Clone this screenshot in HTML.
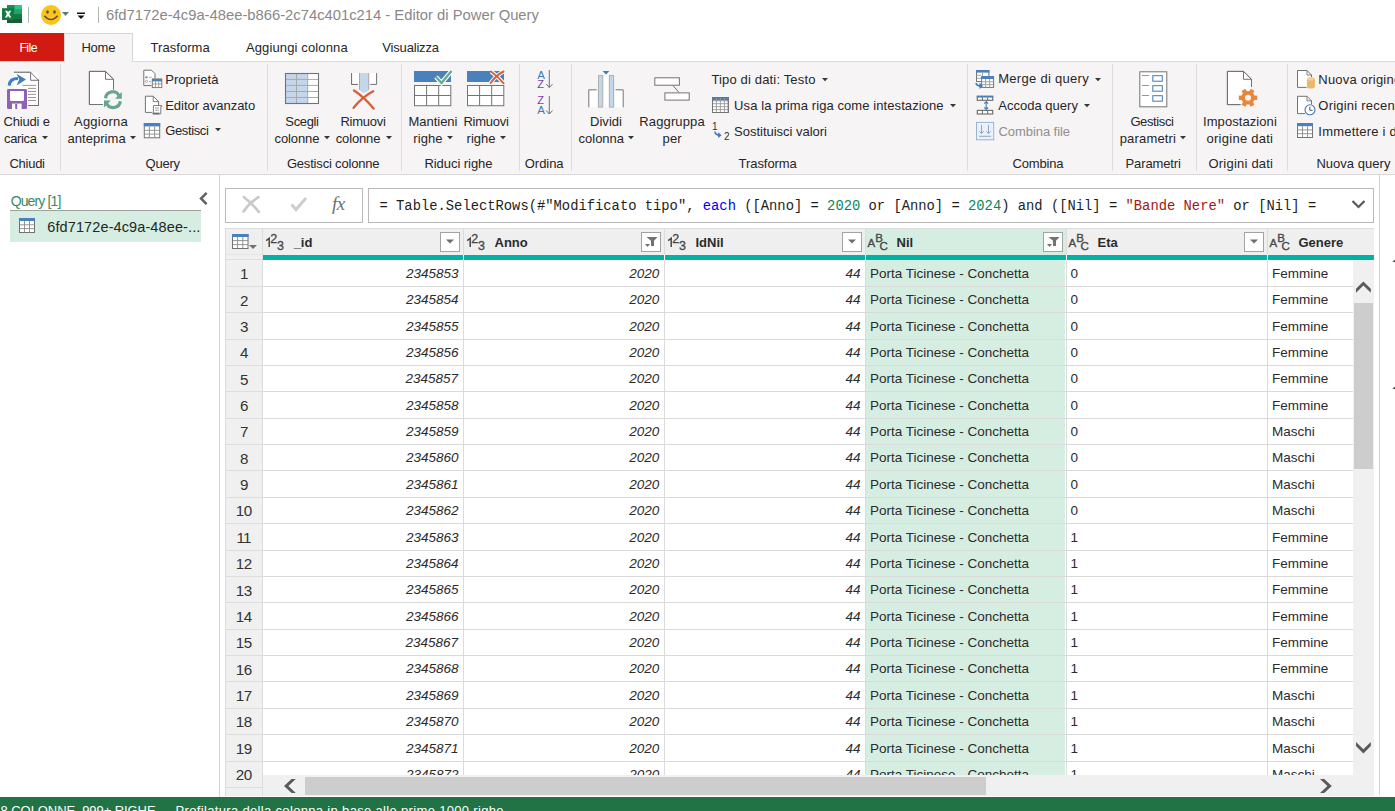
<!DOCTYPE html>
<html><head><meta charset="utf-8"><title>Editor di Power Query</title>
<style>
html,body{margin:0;padding:0;width:1395px;height:811px;overflow:hidden;background:#fff;}
body{position:relative;font-family:"Liberation Sans", sans-serif;}
.t{position:absolute;white-space:nowrap;}
.r{position:absolute;}
.s{position:absolute;overflow:visible;}
</style></head><body>
<div class="r" style="left:0px;top:0px;width:1395px;height:33px;background:#ffffff;"></div>
<svg class="s" style="left:2px;top:5px;" width="21" height="19" viewBox="0 0 21 19">
<rect x="5" y="0" width="15" height="18" fill="#21a366"/>
<rect x="12.5" y="0" width="7.5" height="4.5" fill="#33c481"/>
<rect x="5" y="0" width="7.5" height="4.5" fill="#185c37" opacity="0.35"/>
<rect x="12.5" y="4.5" width="7.5" height="4.5" fill="#21a366"/>
<rect x="5" y="9" width="15" height="4.5" fill="#107c41"/>
<rect x="5" y="13.5" width="15" height="4.5" fill="#185c37"/>
<rect x="0" y="3.2" width="12" height="11.8" fill="#107c41"/>
<path d="M3 5.8 H5.3 L6.1 7.6 L6.9 5.8 H9.2 L7.3 9.1 L9.3 12.4 H7 L6.1 10.6 L5.2 12.4 H2.9 L4.9 9.1 Z" fill="#fff"/>
</svg>
<div class="r" style="left:28px;top:7px;width:1px;height:16px;background:#a9b7ae;"></div>
<svg class="s" style="left:40px;top:4px;" width="22" height="22" viewBox="0 0 22 22">
<circle cx="11" cy="11" r="10" fill="#fcc419"/>
<ellipse cx="7.5" cy="8" rx="1.3" ry="1.8" fill="#505050"/>
<ellipse cx="14.5" cy="8" rx="1.3" ry="1.8" fill="#505050"/>
<path d="M4.3 11.8 Q11 19.5 17.7 11.8" stroke="#505050" stroke-width="1.4" fill="none"/>
</svg>
<svg class="s" style="left:62px;top:12px;" width="8" height="5" viewBox="0 0 8 5"><path d="M0 0 L7 0 L3.5 4 Z" fill="#5e7a6a"/></svg>
<svg class="s" style="left:77px;top:12px;" width="10" height="8" viewBox="0 0 10 8"><rect x="0" y="0.5" width="8" height="1.5" fill="#111"/><path d="M0.5 3.5 L7.5 3.5 L4 7 Z" fill="#111"/></svg>
<div class="r" style="left:98px;top:7px;width:1px;height:16px;background:#a9b7ae;"></div>
<div class="t" style="left:106.00px;top:8.47px;font-size:14.8px;line-height:14.8px;color:#8a8886;font-weight:normal;font-style:normal;font-family:'Liberation Sans', sans-serif;letter-spacing:-0.010px;">6fd7172e-4c9a-48ee-b866-2c74c401c214 - Editor di Power Query</div>
<div class="r" style="left:0px;top:33px;width:1395px;height:28px;background:#ffffff;"></div>
<div class="r" style="left:0px;top:33px;width:64px;height:28px;background:#d11a12;"></div>
<div class="t" style="left:19.40px;top:41.50px;font-size:12.4px;line-height:12.4px;color:#ffffff;font-weight:normal;font-style:normal;font-family:'Liberation Sans', sans-serif;letter-spacing:-0.600px;">File</div>
<div class="r" style="left:64px;top:33px;width:69px;height:29px;background:#f6f4f5;border:1px solid #d6d6d6;border-bottom:none;box-sizing:border-box;"></div>
<div class="t" style="left:81.40px;top:41.00px;font-size:13px;line-height:13px;color:#262626;font-weight:normal;font-style:normal;font-family:'Liberation Sans', sans-serif;letter-spacing:-0.233px;">Home</div>
<div class="t" style="left:150.50px;top:41.00px;font-size:13px;line-height:13px;color:#262626;font-weight:normal;font-style:normal;font-family:'Liberation Sans', sans-serif;letter-spacing:0.056px;">Trasforma</div>
<div class="t" style="left:245.90px;top:41.00px;font-size:13px;line-height:13px;color:#262626;font-weight:normal;font-style:normal;font-family:'Liberation Sans', sans-serif;letter-spacing:0.137px;">Aggiungi colonna</div>
<div class="t" style="left:382.30px;top:41.00px;font-size:13px;line-height:13px;color:#262626;font-weight:normal;font-style:normal;font-family:'Liberation Sans', sans-serif;letter-spacing:-0.178px;">Visualizza</div>
<div class="r" style="left:0px;top:61px;width:1395px;height:1px;background:#dadada;"></div>
<div class="r" style="left:0px;top:62px;width:1395px;height:112px;background:#f6f4f5;"></div>
<div class="r" style="left:0px;top:174px;width:1395px;height:1px;background:#d8d8d8;"></div>
<div class="r" style="left:65px;top:61px;width:67px;height:1px;background:#f6f4f5;"></div>
<div class="r" style="left:60px;top:64px;width:1px;height:107px;background:#dcdcdc;"></div>
<div class="r" style="left:267px;top:64px;width:1px;height:107px;background:#dcdcdc;"></div>
<div class="r" style="left:401px;top:64px;width:1px;height:107px;background:#dcdcdc;"></div>
<div class="r" style="left:519px;top:64px;width:1px;height:107px;background:#dcdcdc;"></div>
<div class="r" style="left:571px;top:64px;width:1px;height:107px;background:#dcdcdc;"></div>
<div class="r" style="left:967px;top:64px;width:1px;height:107px;background:#dcdcdc;"></div>
<div class="r" style="left:1112px;top:64px;width:1px;height:107px;background:#dcdcdc;"></div>
<div class="r" style="left:1196px;top:64px;width:1px;height:107px;background:#dcdcdc;"></div>
<div class="r" style="left:1287px;top:64px;width:1px;height:107px;background:#dcdcdc;"></div>
<div class="t" style="left:9.50px;top:156.80px;font-size:13px;line-height:13px;color:#262626;font-weight:normal;font-style:normal;font-family:'Liberation Sans', sans-serif;letter-spacing:-0.270px;">Chiudi</div>
<div class="t" style="left:145.50px;top:156.80px;font-size:13px;line-height:13px;color:#262626;font-weight:normal;font-style:normal;font-family:'Liberation Sans', sans-serif;letter-spacing:-0.225px;">Query</div>
<div class="t" style="left:286.90px;top:156.80px;font-size:13px;line-height:13px;color:#262626;font-weight:normal;font-style:normal;font-family:'Liberation Sans', sans-serif;letter-spacing:-0.180px;">Gestisci colonne</div>
<div class="t" style="left:424.40px;top:156.80px;font-size:13px;line-height:13px;color:#262626;font-weight:normal;font-style:normal;font-family:'Liberation Sans', sans-serif;letter-spacing:-0.050px;">Riduci righe</div>
<div class="t" style="left:524.80px;top:156.80px;font-size:13px;line-height:13px;color:#262626;font-weight:normal;font-style:normal;font-family:'Liberation Sans', sans-serif;letter-spacing:-0.050px;">Ordina</div>
<div class="t" style="left:738.60px;top:156.80px;font-size:13px;line-height:13px;color:#262626;font-weight:normal;font-style:normal;font-family:'Liberation Sans', sans-serif;letter-spacing:-0.069px;">Trasforma</div>
<div class="t" style="left:1012.50px;top:156.80px;font-size:13px;line-height:13px;color:#262626;font-weight:normal;font-style:normal;font-family:'Liberation Sans', sans-serif;letter-spacing:-0.158px;">Combina</div>
<div class="t" style="left:1125.60px;top:156.80px;font-size:13px;line-height:13px;color:#262626;font-weight:normal;font-style:normal;font-family:'Liberation Sans', sans-serif;letter-spacing:-0.144px;">Parametri</div>
<div class="t" style="left:1208.50px;top:156.80px;font-size:13px;line-height:13px;color:#262626;font-weight:normal;font-style:normal;font-family:'Liberation Sans', sans-serif;letter-spacing:0.214px;">Origini dati</div>
<div class="t" style="left:1316.40px;top:156.80px;font-size:13px;line-height:13px;color:#262626;font-weight:normal;font-style:normal;font-family:'Liberation Sans', sans-serif;letter-spacing:0.030px;">Nuova query</div>
<svg class="s" style="left:4px;top:68px;" width="40" height="44" viewBox="0 0 40 44">
<path d="M10 4.3 H26.6 L34.5 12.3 V37.5 H24" fill="#fff" stroke="#737373" stroke-width="1"/>
<path d="M26.6 4.3 V12.3 H34.5" fill="none" stroke="#737373" stroke-width="1"/>
<rect x="10" y="4.3" width="24" height="33" fill="#fff" />
<path d="M10 4.3 H26.6 L34.5 12.3 V37.5 H24" fill="none" stroke="#737373" stroke-width="1"/>
<path d="M26.6 4.3 V12.3 H34.5" fill="none" stroke="#737373" stroke-width="1"/>
<g stroke="#8c8c8c" stroke-width="0.9">
<path d="M18.5 17.4 H32"/><path d="M24 20.4 H32"/><path d="M24 23.5 H32"/><path d="M24 26.4 H32"/><path d="M24 29.5 H32"/><path d="M24 32.5 H32"/>
</g>
<path d="M5.2 17.6 C5.5 12.5 9 10.6 14 10.6" fill="none" stroke="#3f7fc1" stroke-width="3"/>
<path d="M12.6 5.8 L22 11.6 L12.6 17.4 L15.2 11.6 Z" fill="#3f7fc1"/>
<rect x="3" y="21" width="20" height="20" rx="1.2" fill="#9160b8"/>
<path d="M6 23 H20 V31.8 Q20 33 18.8 33 H7.2 Q6 33 6 31.8 Z" fill="#fff"/>
<rect x="8" y="35.6" width="9.6" height="5.4" fill="#fff"/>
<rect x="11.2" y="36" width="2" height="5" fill="#9160b8"/>
</svg>
<div class="t" style="left:3.50px;top:115.00px;font-size:13px;line-height:13px;color:#262626;font-weight:normal;font-style:normal;font-family:'Liberation Sans', sans-serif;letter-spacing:-0.171px;">Chiudi e</div>
<div class="t" style="left:4.00px;top:131.50px;font-size:13px;line-height:13px;color:#262626;font-weight:normal;font-style:normal;font-family:'Liberation Sans', sans-serif;letter-spacing:-0.340px;">carica</div>
<svg class="s" style="left:42px;top:135.5px;" width="7" height="4" viewBox="0 0 7 4"><path d="M0 0 L6 0 L3 3.2 Z" fill="#2f3a33"/></svg>
<svg class="s" style="left:84px;top:66px;" width="44" height="46" viewBox="0 0 44 46">
<path d="M18.7 38.5 H5.4 V5.4 H21.5 L29.5 13.3 V23.5" fill="#fff" stroke="#737373" stroke-width="1"/>
<path d="M21.5 5.4 V13.3 H29.5" fill="none" stroke="#737373" stroke-width="1"/>
<rect x="6" y="14" width="23" height="24" fill="#fff"/>
<path d="M18.7 38.5 H5.4 V5.4 H21.5 L29.5 13.3 V23.5" fill="none" stroke="#737373" stroke-width="1"/>
<circle cx="28.9" cy="33.7" r="9.4" fill="#f6f4f5"/>
<g fill="none" stroke="#67a58e" stroke-width="3.2">
<path d="M21.5 32.2 A7.2 7.2 0 0 1 35.2 30"/>
<path d="M36.3 35.2 A7.2 7.2 0 0 1 22.6 37.4"/>
</g>
<path d="M37.8 26 V32.8 H31 Z" fill="#67a58e"/>
<path d="M20 41.4 V34.6 H26.8 Z" fill="#67a58e"/>
</svg>
<div class="t" style="left:74.00px;top:115.00px;font-size:13px;line-height:13px;color:#262626;font-weight:normal;font-style:normal;font-family:'Liberation Sans', sans-serif;letter-spacing:0.236px;">Aggiorna</div>
<div class="t" style="left:67.40px;top:131.50px;font-size:13px;line-height:13px;color:#262626;font-weight:normal;font-style:normal;font-family:'Liberation Sans', sans-serif;letter-spacing:0.056px;">anteprima</div>
<svg class="s" style="left:130px;top:135.5px;" width="7" height="4" viewBox="0 0 7 4"><path d="M0 0 L6 0 L3 3.2 Z" fill="#2f3a33"/></svg>
<svg class="s" style="left:140px;top:66px;" width="26" height="78" viewBox="0 0 26 78">
<path d="M3.8 19.5 V4.2 H11.5 L15 7.7 V12.5" fill="#fff" stroke="#737373" stroke-width="1"/>
<circle cx="6.5" cy="11.3" r="1.2" fill="#9a9a9a"/><path d="M9 11.3 H11.5" stroke="#9a9a9a" stroke-width="0.9"/>
<circle cx="6.5" cy="15.4" r="1.1" fill="none" stroke="#9a9a9a" stroke-width="0.8"/><path d="M9 15.4 H11" stroke="#9a9a9a" stroke-width="0.9"/>
<path d="M3.8 19.6 H11.6" stroke="#737373" stroke-width="1"/>
<rect x="12.3" y="13" width="9.5" height="8.6" fill="#fff" stroke="#737373" stroke-width="0.9"/>
<rect x="12" y="12.8" width="10" height="2.6" fill="#4a80bb"/>
<path d="M12.3 18 H21.8 M15.5 15.4 V21.6 M18.7 15.4 V21.6" stroke="#8a8a8a" stroke-width="0.8"/>
<path d="M12 46.4 H5.4 V30.2 H13.2 L18.6 35.6 V40" fill="#fff" stroke="#737373" stroke-width="1"/>
<path d="M13.2 30.2 V35.6 H18.6" fill="none" stroke="#737373" stroke-width="0.9"/>
<path d="M13.5 39.5 H21.8 V40.6 H20.8 V47.8 H13.3 Z" fill="#fff" stroke="#737373" stroke-width="0.9"/>
<path d="M15 42 H19 M15 44.2 H19" stroke="#8a8a8a" stroke-width="0.8"/>
<rect x="12.6" y="46.6" width="6.8" height="1.8" fill="#707070"/>
<rect x="4.3" y="57.5" width="15.4" height="14.3" fill="#fff" stroke="#737373" stroke-width="1"/>
<rect x="3.8" y="57" width="16.4" height="3.4" fill="#4a80bb"/>
<path d="M4.3 64.3 H19.7 M4.3 68.1 H19.7 M9.4 60.4 V71.8 M14.6 60.4 V71.8" stroke="#8a8a8a" stroke-width="0.9"/>
</svg>
<div class="t" style="left:165.20px;top:72.70px;font-size:13px;line-height:13px;color:#262626;font-weight:normal;font-style:normal;font-family:'Liberation Sans', sans-serif;letter-spacing:0.069px;">Proprietà</div>
<div class="t" style="left:165.20px;top:98.50px;font-size:13px;line-height:13px;color:#262626;font-weight:normal;font-style:normal;font-family:'Liberation Sans', sans-serif;letter-spacing:-0.025px;">Editor avanzato</div>
<div class="t" style="left:165.20px;top:124.40px;font-size:13px;line-height:13px;color:#262626;font-weight:normal;font-style:normal;font-family:'Liberation Sans', sans-serif;letter-spacing:-0.379px;">Gestisci</div>
<svg class="s" style="left:214.5px;top:128.3px;" width="7" height="4" viewBox="0 0 7 4"><path d="M0 0 L6 0 L3 3.2 Z" fill="#2f3a33"/></svg>
<svg class="s" style="left:280px;top:68px;" width="104" height="44" viewBox="0 0 104 44">
<rect x="5.5" y="5.5" width="33" height="30" fill="#fff"/>
<rect x="5.5" y="5.5" width="22" height="30" fill="#c4d6ea"/>
<g stroke="#a9a9a9" stroke-width="1">
<path d="M16.5 5.5 V35.5 M27.7 5.5 V35.5 M5.5 11.4 H38.5 M5.5 17.4 H38.5 M5.5 23.5 H38.5 M5.5 29.5 H38.5"/>
</g>
<rect x="5.5" y="5.5" width="33" height="30" fill="none" stroke="#737373" stroke-width="1.1"/>
<path d="M71.6 5 V16.4 H77.8" fill="#fff" stroke="#737373" stroke-width="1"/>
<rect x="72.1" y="5" width="7" height="11" fill="#fff"/>
<rect x="89.5" y="5" width="7" height="11" fill="#fff"/>
<path d="M71.6 5 V16.4 H77.8 M96.6 5 V16.4 H90.2" fill="none" stroke="#737373" stroke-width="1"/>
<path d="M79.5 5 V22.5 L84.1 25 L88.7 22.5 V5 Z" fill="#c4d6ea"/>
<path d="M79.5 5 V21.5 M88.7 5 V21.5" stroke="#a9a9a9" stroke-width="1"/>
<path d="M74 22.6 Q84 29 93.5 40.5" fill="none" stroke="#d9603b" stroke-width="2.4" stroke-linecap="round"/>
<path d="M93.2 23.3 Q82 29 73.6 39.8" fill="none" stroke="#d9603b" stroke-width="2.4" stroke-linecap="round"/>
</svg>
<div class="t" style="left:285.30px;top:115.00px;font-size:13px;line-height:13px;color:#262626;font-weight:normal;font-style:normal;font-family:'Liberation Sans', sans-serif;letter-spacing:-0.340px;">Scegli</div>
<div class="t" style="left:274.60px;top:131.50px;font-size:13px;line-height:13px;color:#262626;font-weight:normal;font-style:normal;font-family:'Liberation Sans', sans-serif;letter-spacing:-0.125px;">colonne</div>
<svg class="s" style="left:324px;top:135.5px;" width="7" height="4" viewBox="0 0 7 4"><path d="M0 0 L6 0 L3 3.2 Z" fill="#2f3a33"/></svg>
<div class="t" style="left:340.40px;top:115.00px;font-size:13px;line-height:13px;color:#262626;font-weight:normal;font-style:normal;font-family:'Liberation Sans', sans-serif;letter-spacing:-0.225px;">Rimuovi</div>
<div class="t" style="left:335.70px;top:131.50px;font-size:13px;line-height:13px;color:#262626;font-weight:normal;font-style:normal;font-family:'Liberation Sans', sans-serif;letter-spacing:-0.142px;">colonne</div>
<svg class="s" style="left:386px;top:135.5px;" width="7" height="4" viewBox="0 0 7 4"><path d="M0 0 L6 0 L3 3.2 Z" fill="#2f3a33"/></svg>
<svg class="s" style="left:410px;top:66px;" width="98" height="44" viewBox="0 0 98 44">
<rect x="4" y="5" width="37" height="11" fill="#4a80bb"/>
<rect x="4.5" y="19.5" width="36.3" height="20.2" fill="#fff" stroke="#737373" stroke-width="1"/>
<path d="M16.6 19.5 V39.7 M28.7 19.5 V39.7 M4.5 29.5 H40.8" stroke="#737373" stroke-width="1"/>
<path d="M26 11 L31.5 17 L41.5 5" fill="none" stroke="#fff" stroke-width="4.5"/>
<path d="M26 11 L31.5 17 L41.5 5" fill="none" stroke="#68a88f" stroke-width="2.4"/>
<rect x="57" y="5" width="37" height="11" fill="#4a80bb"/>
<rect x="57.5" y="19.5" width="36.3" height="20.2" fill="#fff" stroke="#737373" stroke-width="1"/>
<path d="M69.6 19.5 V39.7 M81.7 19.5 V39.7 M57.5 29.5 H93.8" stroke="#737373" stroke-width="1"/>
<path d="M81 5.5 Q88 10.5 93.6 17.3 M93.5 5.5 Q86 9.5 80.6 17" fill="none" stroke="#fff" stroke-width="4"/>
<path d="M81 5.5 Q88 10.5 93.6 17.3 M93.5 5.5 Q86 9.5 80.6 17" fill="none" stroke="#d9603b" stroke-width="2" stroke-linecap="round"/>
</svg>
<div class="t" style="left:408.60px;top:115.00px;font-size:13px;line-height:13px;color:#262626;font-weight:normal;font-style:normal;font-family:'Liberation Sans', sans-serif;letter-spacing:-0.050px;">Mantieni</div>
<div class="t" style="left:413.30px;top:131.50px;font-size:13px;line-height:13px;color:#262626;font-weight:normal;font-style:normal;font-family:'Liberation Sans', sans-serif;letter-spacing:0.075px;">righe</div>
<svg class="s" style="left:447px;top:135.5px;" width="7" height="4" viewBox="0 0 7 4"><path d="M0 0 L6 0 L3 3.2 Z" fill="#2f3a33"/></svg>
<div class="t" style="left:463.40px;top:115.00px;font-size:13px;line-height:13px;color:#262626;font-weight:normal;font-style:normal;font-family:'Liberation Sans', sans-serif;letter-spacing:-0.258px;">Rimuovi</div>
<div class="t" style="left:466.60px;top:131.50px;font-size:13px;line-height:13px;color:#262626;font-weight:normal;font-style:normal;font-family:'Liberation Sans', sans-serif;">righe</div>
<svg class="s" style="left:500px;top:135.5px;" width="7" height="4" viewBox="0 0 7 4"><path d="M0 0 L6 0 L3 3.2 Z" fill="#2f3a33"/></svg>
<svg class="s" style="left:530px;top:66px;" width="30" height="52" viewBox="0 0 30 52">
<text x="11" y="12.7" font-family="Liberation Sans" font-size="11.5" fill="#3d7ab8" text-anchor="middle">A</text>
<text x="10.5" y="21.8" font-family="Liberation Sans" font-size="11" fill="#7b3fa8" text-anchor="middle">Z</text>
<text x="10.5" y="37.8" font-family="Liberation Sans" font-size="11" fill="#7b3fa8" text-anchor="middle">Z</text>
<text x="11" y="47.8" font-family="Liberation Sans" font-size="11.5" fill="#3d7ab8" text-anchor="middle">A</text>
<g fill="none" stroke="#707070" stroke-width="1">
<path d="M19.3 4 V21.5 M16.2 18 L19.3 21.5 L22.6 18"/>
<path d="M19.3 30 V48 M16.2 44.5 L19.3 48 L22.6 44.5"/>
</g>
</svg>
<svg class="s" style="left:584px;top:68px;" width="110" height="42" viewBox="0 0 110 42">
<rect x="4.3" y="21.3" width="8.5" height="18" fill="#fff"/>
<rect x="31.2" y="21.3" width="8.5" height="18" fill="#fff"/>
<rect x="18.8" y="7.3" width="6.4" height="32" fill="#fff"/>
<path d="M4.8 39.3 V21.8 H12.8 M31.5 21.8 H39.2 V39.3" fill="none" stroke="#737373" stroke-width="1"/>
<rect x="14.5" y="7.6" width="4.3" height="31.5" fill="#c4d6ea" stroke="#a9a9a9" stroke-width="0.9"/>
<rect x="25.3" y="7.6" width="4.3" height="31.5" fill="#c4d6ea" stroke="#a9a9a9" stroke-width="0.9"/>
<path d="M18.6 3 H25.4 L22 6.6 Z" fill="#3d7ab8"/>
<rect x="70.8" y="9.8" width="24.6" height="7.4" fill="#fff" stroke="#737373" stroke-width="1"/>
<rect x="80.9" y="24.9" width="24.3" height="7.2" fill="#fff" stroke="#737373" stroke-width="1"/>
<path d="M89 17.6 L95 24.5" stroke="#737373" stroke-width="1"/>
</svg>
<div class="t" style="left:590.00px;top:115.00px;font-size:13px;line-height:13px;color:#262626;font-weight:normal;font-style:normal;font-family:'Liberation Sans', sans-serif;letter-spacing:0.040px;">Dividi</div>
<div class="t" style="left:578.60px;top:131.50px;font-size:13px;line-height:13px;color:#262626;font-weight:normal;font-style:normal;font-family:'Liberation Sans', sans-serif;letter-spacing:-0.025px;">colonna</div>
<svg class="s" style="left:627.7px;top:135.5px;" width="7" height="4" viewBox="0 0 7 4"><path d="M0 0 L6 0 L3 3.2 Z" fill="#2f3a33"/></svg>
<div class="t" style="left:639.30px;top:115.00px;font-size:13px;line-height:13px;color:#262626;font-weight:normal;font-style:normal;font-family:'Liberation Sans', sans-serif;letter-spacing:0.131px;">Raggruppa</div>
<div class="t" style="left:662.50px;top:131.50px;font-size:13px;line-height:13px;color:#262626;font-weight:normal;font-style:normal;font-family:'Liberation Sans', sans-serif;letter-spacing:0.200px;">per</div>
<svg class="s" style="left:706px;top:92px;" width="30" height="52" viewBox="0 0 30 52">
<rect x="6.5" y="5.5" width="15.8" height="15" fill="#fff" stroke="#737373" stroke-width="1"/>
<rect x="6.5" y="5.5" width="15.8" height="3" fill="#4a80bb"/>
<path d="M6.5 8.8 H22.3 M6.5 11.7 H22.3 M6.5 14.7 H22.3 M6.5 17.6 H22.3 M10.4 5.5 V20.5 M14.4 5.5 V20.5 M18.4 5.5 V20.5" stroke="#999" stroke-width="0.9"/>
<rect x="6.5" y="5.5" width="15.8" height="15" fill="none" stroke="#737373" stroke-width="1"/>
<text x="6" y="37.8" font-family="Liberation Sans" font-size="10" fill="#333">1</text>
<text x="18" y="47.5" font-family="Liberation Sans" font-size="10" fill="#333">2</text>
<path d="M8.8 39.6 Q9.5 43.2 14 43.2" fill="none" stroke="#3d7ab8" stroke-width="1.6"/>
<path d="M12.2 40.3 L15.6 43.2 L12.2 46 Z" fill="#3d7ab8"/>
</svg>
<div class="t" style="left:711.40px;top:73.00px;font-size:13px;line-height:13px;color:#262626;font-weight:normal;font-style:normal;font-family:'Liberation Sans', sans-serif;letter-spacing:0.158px;">Tipo di dati: Testo</div>
<svg class="s" style="left:821.5px;top:78px;" width="7" height="4" viewBox="0 0 7 4"><path d="M0 0 L6 0 L3 3.2 Z" fill="#2f3a33"/></svg>
<div class="t" style="left:734.10px;top:98.80px;font-size:13px;line-height:13px;color:#262626;font-weight:normal;font-style:normal;font-family:'Liberation Sans', sans-serif;letter-spacing:0.084px;">Usa la prima riga come intestazione</div>
<svg class="s" style="left:950px;top:104px;" width="7" height="4" viewBox="0 0 7 4"><path d="M0 0 L6 0 L3 3.2 Z" fill="#2f3a33"/></svg>
<div class="t" style="left:734.10px;top:124.90px;font-size:13px;line-height:13px;color:#262626;font-weight:normal;font-style:normal;font-family:'Liberation Sans', sans-serif;letter-spacing:-0.018px;">Sostituisci valori</div>
<svg class="s" style="left:972px;top:66px;" width="26" height="78" viewBox="0 0 26 78">
<rect x="4.5" y="4.5" width="12.4" height="11" fill="#fff" stroke="#737373" stroke-width="1"/>
<rect x="4" y="4" width="13.4" height="2.6" fill="#4a80bb"/>
<path d="M4.5 9.3 H9 M4.5 12.3 H9 M10.5 6.6 V10" stroke="#999" stroke-width="0.9"/>
<rect x="9.6" y="10.6" width="12" height="10.8" fill="#fff" stroke="#737373" stroke-width="1"/>
<rect x="9.2" y="10.1" width="12.8" height="2.9" fill="#4a80bb"/>
<path d="M9.6 15.8 H21.6 M9.6 18.6 H21.6 M13.6 13 V21.4 M17.6 13 V21.4" stroke="#999" stroke-width="0.9"/>
<path d="M4.2 17 Q4.5 20 8.5 20" fill="none" stroke="#3d7ab8" stroke-width="1.8"/>
<path d="M7.5 16.8 L11 20 L7.5 23 Z" fill="#3d7ab8"/>
<rect x="5.3" y="30.3" width="15.4" height="4" fill="#fff" stroke="#737373" stroke-width="1.2"/>
<rect x="4.8" y="29.8" width="16.4" height="1.8" fill="#4a80bb"/>
<path d="M10.4 31.5 V34.3 M15.6 31.5 V34.3" stroke="#737373" stroke-width="1.1"/>
<rect x="5.3" y="44.4" width="15.4" height="3.6" fill="#fff" stroke="#737373" stroke-width="1.2"/>
<path d="M10.4 44.4 V48 M15.6 44.4 V48" stroke="#737373" stroke-width="1.1"/>
<path d="M14.2 35.5 V43.5 M12.3 37.6 L14.2 35.5 L16.1 37.6 M12.3 41.4 L14.2 43.5 L16.1 41.4" fill="none" stroke="#3d7ab8" stroke-width="1.1"/>
<rect x="4.5" y="56.4" width="17.2" height="17.4" fill="#eaf1fa" stroke="#9ab4d6" stroke-width="1"/>
<g fill="none" stroke="#8ea7c6" stroke-width="1">
<path d="M9.5 59 V67.5 M7.3 65.2 L9.5 67.5 L11.7 65.2"/>
<path d="M16.5 59 V67.5 M14.3 65.2 L16.5 67.5 L18.7 65.2"/>
<path d="M7 70.3 H19"/>
</g>
</svg>
<div class="t" style="left:998.20px;top:72.20px;font-size:13px;line-height:13px;color:#262626;font-weight:normal;font-style:normal;font-family:'Liberation Sans', sans-serif;letter-spacing:0.292px;">Merge di query</div>
<svg class="s" style="left:1095px;top:77.5px;" width="7" height="4" viewBox="0 0 7 4"><path d="M0 0 L6 0 L3 3.2 Z" fill="#2f3a33"/></svg>
<div class="t" style="left:998.20px;top:98.90px;font-size:13px;line-height:13px;color:#262626;font-weight:normal;font-style:normal;font-family:'Liberation Sans', sans-serif;letter-spacing:0.018px;">Accoda query</div>
<svg class="s" style="left:1084px;top:104px;" width="7" height="4" viewBox="0 0 7 4"><path d="M0 0 L6 0 L3 3.2 Z" fill="#2f3a33"/></svg>
<div class="t" style="left:998.50px;top:124.70px;font-size:13px;line-height:13px;color:#8f8f8f;font-weight:normal;font-style:normal;font-family:'Liberation Sans', sans-serif;letter-spacing:-0.068px;">Combina file</div>
<svg class="s" style="left:1134px;top:66px;" width="40" height="46" viewBox="0 0 40 46">
<rect x="5.8" y="5.8" width="27" height="35" fill="#fff" stroke="#737373" stroke-width="1"/>
<path d="M8 9.5 H15 M8 19.5 H15 M8 29.5 H15" stroke="#8a8a8a" stroke-width="0.9"/>
<g fill="none" stroke="#3d7ab8" stroke-width="1">
<rect x="18.8" y="9.7" width="9.5" height="5.5"/>
<rect x="18.8" y="19.7" width="9.5" height="5.5"/>
<rect x="18.8" y="29.7" width="9.5" height="5.5"/>
</g>
</svg>
<div class="t" style="left:1130.40px;top:115.00px;font-size:13px;line-height:13px;color:#262626;font-weight:normal;font-style:normal;font-family:'Liberation Sans', sans-serif;letter-spacing:-0.379px;">Gestisci</div>
<div class="t" style="left:1119.70px;top:131.50px;font-size:13px;line-height:13px;color:#262626;font-weight:normal;font-style:normal;font-family:'Liberation Sans', sans-serif;letter-spacing:0.175px;">parametri</div>
<svg class="s" style="left:1180px;top:135.5px;" width="7" height="4" viewBox="0 0 7 4"><path d="M0 0 L6 0 L3 3.2 Z" fill="#2f3a33"/></svg>
<svg class="s" style="left:1222px;top:66px;" width="40" height="46" viewBox="0 0 40 46">
<path d="M18.5 38.6 H5.4 V5.4 H21.5 L29.5 13.3 V21" fill="#fff" stroke="#737373" stroke-width="1"/>
<rect x="6" y="14" width="23" height="24" fill="#fff"/>
<path d="M18.5 38.6 H5.4 V5.4 H21.5 L29.5 13.3 V21" fill="none" stroke="#737373" stroke-width="1"/>
<path d="M21.5 5.4 V13.3 H29.5" fill="none" stroke="#737373" stroke-width="1"/>
<g transform="translate(26 31.8)">
<circle r="6.8" fill="#e8873a"/>
<g fill="#e8873a">
<rect x="-2.2" y="-9.2" width="4.4" height="18.4" transform="rotate(30)"/>
<rect x="-2.2" y="-9.2" width="4.4" height="18.4" transform="rotate(90)"/>
<rect x="-2.2" y="-9.2" width="4.4" height="18.4" transform="rotate(150)"/>
</g>
<circle r="3" fill="#f6f4f5"/>
</g>
</svg>
<div class="t" style="left:1203.00px;top:115.00px;font-size:13px;line-height:13px;color:#262626;font-weight:normal;font-style:normal;font-family:'Liberation Sans', sans-serif;letter-spacing:0.073px;">Impostazioni</div>
<div class="t" style="left:1206.50px;top:131.50px;font-size:13px;line-height:13px;color:#262626;font-weight:normal;font-style:normal;font-family:'Liberation Sans', sans-serif;letter-spacing:0.264px;">origine dati</div>
<svg class="s" style="left:1292px;top:66px;" width="28" height="78" viewBox="0 0 28 78">
<path d="M5.5 21.4 V4.5 H15 L19.5 9 V11" fill="#fff" stroke="#737373" stroke-width="1"/>
<rect x="6" y="9" width="13" height="12" fill="#fff"/>
<path d="M5.5 21.4 H14.5" stroke="#737373" stroke-width="1"/>
<path d="M15 4.5 V9 H19.5" fill="none" stroke="#737373" stroke-width="0.9"/>
<path d="M14.9 12.8 V20.8 A4 1.8 0 0 0 22.9 20.8 V12.8 Z" fill="#e9b86b"/>
<ellipse cx="18.9" cy="12.8" rx="4" ry="1.8" fill="#f2cf8e"/>
<path d="M5.5 47.6 V30.3 H15 L19.5 34.8 V38.5" fill="#fff" stroke="#737373" stroke-width="1"/>
<rect x="6" y="35" width="13" height="12" fill="#fff"/>
<path d="M5.5 47.6 H13" stroke="#737373" stroke-width="1"/>
<path d="M15 30.3 V34.8 H19.5" fill="none" stroke="#737373" stroke-width="0.9"/>
<circle cx="18" cy="43.8" r="5" fill="#fff" stroke="#3d7ab8" stroke-width="1.1"/>
<path d="M17.8 40.8 V44.3 H20.5" fill="none" stroke="#444" stroke-width="0.9"/>
<rect x="5.5" y="57.5" width="15" height="14" fill="#fff" stroke="#737373" stroke-width="1"/>
<rect x="5" y="57" width="16" height="3.2" fill="#4a80bb"/>
<path d="M5.5 63.9 H20.5 M5.5 67.7 H20.5 M10.5 60.2 V71.5 M15.5 60.2 V71.5" stroke="#8a8a8a" stroke-width="0.9"/>
</svg>
<div class="t" style="left:1318.30px;top:73.00px;font-size:13px;line-height:13px;color:#262626;font-weight:normal;font-style:normal;font-family:'Liberation Sans', sans-serif;letter-spacing:0.22px;">Nuova origine</div>
<div class="t" style="left:1318.30px;top:98.60px;font-size:13px;line-height:13px;color:#262626;font-weight:normal;font-style:normal;font-family:'Liberation Sans', sans-serif;letter-spacing:0.22px;">Origini recenti</div>
<div class="t" style="left:1318.30px;top:124.50px;font-size:13px;line-height:13px;color:#262626;font-weight:normal;font-style:normal;font-family:'Liberation Sans', sans-serif;letter-spacing:0.22px;">Immettere i dati</div>
<div class="r" style="left:0px;top:175px;width:219px;height:622px;background:#ffffff;"></div>
<div class="r" style="left:219px;top:175px;width:1px;height:622px;background:#d6d6d6;"></div>
<div class="t" style="left:10.70px;top:193.75px;font-size:14px;line-height:14px;color:#3a8a62;font-weight:normal;font-style:normal;font-family:'Liberation Sans', sans-serif;letter-spacing:-0.875px;">Query [1]</div>
<div class="r" style="left:10px;top:210px;width:191px;height:1px;background:#a0a0a0;"></div>
<div class="r" style="left:10px;top:211px;width:191px;height:31px;background:#d5eee1;"></div>
<svg class="s" style="left:18px;top:217px;" width="20" height="18" viewBox="0 0 20 18">
<rect x="1.5" y="1.5" width="15" height="14" fill="#fff" stroke="#707070" stroke-width="1"/>
<rect x="1" y="1" width="16" height="3" fill="#4a80bb"/>
<path d="M1.5 7.8 H16.5 M1.5 11.6 H16.5 M6.5 4 V15.5 M11.5 4 V15.5" stroke="#8a8a8a" stroke-width="0.9"/>
</svg>
<div class="t" style="left:47.30px;top:220.03px;font-size:14.5px;line-height:14.5px;color:#262626;font-weight:normal;font-style:normal;font-family:'Liberation Sans', sans-serif;letter-spacing:0.107px;">6fd7172e-4c9a-48ee-...</div>
<svg class="s" style="left:198px;top:191px;" width="12" height="16" viewBox="0 0 12 16"><path d="M8.6 1.8 L3 7.5 L8.6 13.2" fill="none" stroke="#636363" stroke-width="2.5"/></svg>
<div class="r" style="left:220px;top:175px;width:1175px;height:622px;background:#ffffff;"></div>
<div class="r" style="left:1379px;top:175px;width:1px;height:620px;background:#d3d3d3;"></div>
<div class="r" style="left:225px;top:188px;width:138px;height:35px;background:#fff;border:1px solid #b9b9b9;box-sizing:border-box;"></div>
<svg class="s" style="left:240px;top:192px;" width="100" height="28" viewBox="0 0 100 28">
<path d="M3.8 5 Q11 10.5 18.8 19.8" fill="none" stroke="#c9c9c9" stroke-width="2.6" stroke-linecap="round"/>
<path d="M18.5 5.2 Q9 11 3.5 19.5" fill="none" stroke="#c9c9c9" stroke-width="2.6" stroke-linecap="round"/>
<path d="M51.6 12.6 L56 17.6 L66 6" fill="none" stroke="#cdcdcd" stroke-width="3"/>
</svg>
<div class="t" style="left:332px;top:193.5px;font-size:19px;line-height:19px;color:#707070;font-style:italic;font-family:'Liberation Serif', serif;letter-spacing:-0.5px;">fx</div>
<div class="r" style="left:368px;top:188px;width:1006px;height:35px;background:#fff;border:1px solid #b9b9b9;box-sizing:border-box;"></div>
<svg class="s" style="left:1350px;top:197px;" width="18" height="14" viewBox="0 0 18 14"><path d="M2.5 4 L8.5 10 L14.5 4" fill="none" stroke="#595959" stroke-width="2.2"/></svg>
<div class="t" style="left:379.5px;top:199.91px;font-size:13.82px;line-height:13.82px;font-family:'Liberation Mono', monospace;"><span style="color:#1e1e1e">= Table.SelectRows(#"Modificato tipo", </span><span style="color:#0000ff">each</span><span style="color:#1e1e1e"> ([Anno] = </span><span style="color:#098658">2020</span><span style="color:#1e1e1e"> or [Anno] = </span><span style="color:#098658">2024</span><span style="color:#1e1e1e">) and ([Nil] = </span><span style="color:#a31515">"Bande Nere"</span><span style="color:#1e1e1e"> or [Nil] =</span></div>
<div class="r" style="left:225px;top:228px;width:1149px;height:1px;background:#dedede;"></div>
<div class="r" style="left:225px;top:229px;width:1149px;height:26px;background:#efefef;"></div>
<div class="r" style="left:866px;top:229px;width:200px;height:26px;background:#d5eee1;"></div>
<div class="r" style="left:225px;top:255px;width:37px;height:542px;background:#f0f0f0;"></div>
<div class="r" style="left:225px;top:254px;width:37px;height:1px;background:#e4e4e4;"></div>
<div class="r" style="left:225px;top:259px;width:37px;height:1px;background:#e0e0e0;"></div>
<div class="r" style="left:262px;top:229px;width:1px;height:568px;background:#dcdcdc;"></div>
<div class="r" style="left:225px;top:228px;width:1px;height:569px;background:#dcdcdc;"></div>
<svg class="s" style="left:231px;top:233px;" width="28" height="18" viewBox="0 0 28 18">
<rect x="1.5" y="1.5" width="15.5" height="14" fill="#fff" stroke="#707070" stroke-width="1"/>
<rect x="1" y="1" width="16.5" height="3" fill="#4a80bb"/>
<path d="M1.5 7.6 H17 M1.5 11.6 H17 M6.6 4 V15.5 M11.8 4 V15.5" stroke="#8a8a8a" stroke-width="0.9"/>
<path d="M18 12 H26 L22 16 Z" fill="#707070"/>
</svg>
<svg class="s" style="left:265px;top:231px;" width="24" height="22" viewBox="0 0 24 22">
<path d="M1.2 9.6 L4.2 7.2 V16" fill="none" stroke="#484848" stroke-width="1.5"/>
<text x="5.2" y="12" font-family="Liberation Sans" font-size="12.5" fill="#484848" stroke="#484848" stroke-width="0.3">2</text>
<text x="12" y="19.4" font-family="Liberation Sans" font-size="12.5" fill="#484848" stroke="#484848" stroke-width="0.3">3</text>
</svg>
<div class="t" style="left:293.65px;top:235.80px;font-size:13px;line-height:13px;color:#2b2b2b;font-weight:bold;font-style:normal;font-family:'Liberation Sans', sans-serif;">_id</div>
<div class="r" style="left:440px;top:232px;width:20px;height:20px;background:#fff;border:1px solid #a3a3a3;box-sizing:border-box;"></div>
<svg class="s" style="left:446px;top:239px;" width="8" height="5" viewBox="0 0 8 5"><path d="M0 0.5 H8 L4 4.5 Z" fill="#6e6e6e"/></svg>
<div class="r" style="left:463px;top:229px;width:1px;height:26px;background:#dcdcdc;"></div>
<svg class="s" style="left:466px;top:231px;" width="24" height="22" viewBox="0 0 24 22">
<path d="M1.2 9.6 L4.2 7.2 V16" fill="none" stroke="#484848" stroke-width="1.5"/>
<text x="5.2" y="12" font-family="Liberation Sans" font-size="12.5" fill="#484848" stroke="#484848" stroke-width="0.3">2</text>
<text x="12" y="19.4" font-family="Liberation Sans" font-size="12.5" fill="#484848" stroke="#484848" stroke-width="0.3">3</text>
</svg>
<div class="t" style="left:494.50px;top:235.80px;font-size:13px;line-height:13px;color:#2b2b2b;font-weight:bold;font-style:normal;font-family:'Liberation Sans', sans-serif;">Anno</div>
<div class="r" style="left:641px;top:232px;width:20px;height:20px;background:#fff;border:1px solid #a3a3a3;box-sizing:border-box;"></div>
<svg class="s" style="left:644px;top:236px;" width="15" height="12" viewBox="0 0 15 12"><path d="M2.5 1 H13.5 L10 4.8 V10 H7 V4.8 Z" fill="#727272"/><path d="M1 8 H6 L3.5 11 Z" fill="#727272"/></svg>
<div class="r" style="left:664px;top:229px;width:1px;height:26px;background:#dcdcdc;"></div>
<svg class="s" style="left:667px;top:231px;" width="24" height="22" viewBox="0 0 24 22">
<path d="M1.2 9.6 L4.2 7.2 V16" fill="none" stroke="#484848" stroke-width="1.5"/>
<text x="5.2" y="12" font-family="Liberation Sans" font-size="12.5" fill="#484848" stroke="#484848" stroke-width="0.3">2</text>
<text x="12" y="19.4" font-family="Liberation Sans" font-size="12.5" fill="#484848" stroke="#484848" stroke-width="0.3">3</text>
</svg>
<div class="t" style="left:695.50px;top:235.80px;font-size:13px;line-height:13px;color:#2b2b2b;font-weight:bold;font-style:normal;font-family:'Liberation Sans', sans-serif;">IdNil</div>
<div class="r" style="left:842px;top:232px;width:20px;height:20px;background:#fff;border:1px solid #a3a3a3;box-sizing:border-box;"></div>
<svg class="s" style="left:848px;top:239px;" width="8" height="5" viewBox="0 0 8 5"><path d="M0 0.5 H8 L4 4.5 Z" fill="#6e6e6e"/></svg>
<div class="r" style="left:865px;top:229px;width:1px;height:26px;background:#dcdcdc;"></div>
<svg class="s" style="left:867px;top:231px;" width="24" height="22" viewBox="0 0 24 22">
<text x="0.6" y="15.6" font-family="Liberation Sans" font-size="11.5" fill="#484848" stroke="#484848" stroke-width="0.35">A</text>
<text x="8.3" y="11.3" font-family="Liberation Sans" font-size="11.5" fill="#484848" stroke="#484848" stroke-width="0.35">B</text>
<text x="12.6" y="19.4" font-family="Liberation Sans" font-size="11.5" fill="#484848" stroke="#484848" stroke-width="0.35">C</text>
</svg>
<div class="t" style="left:896.50px;top:235.80px;font-size:13px;line-height:13px;color:#2b2b2b;font-weight:bold;font-style:normal;font-family:'Liberation Sans', sans-serif;">Nil</div>
<div class="r" style="left:1043px;top:232px;width:20px;height:20px;background:#fff;border:1px solid #a3a3a3;box-sizing:border-box;"></div>
<svg class="s" style="left:1046px;top:236px;" width="15" height="12" viewBox="0 0 15 12"><path d="M2.5 1 H13.5 L10 4.8 V10 H7 V4.8 Z" fill="#727272"/><path d="M1 8 H6 L3.5 11 Z" fill="#727272"/></svg>
<div class="r" style="left:1066px;top:229px;width:1px;height:26px;background:#dcdcdc;"></div>
<svg class="s" style="left:1068px;top:231px;" width="24" height="22" viewBox="0 0 24 22">
<text x="0.6" y="15.6" font-family="Liberation Sans" font-size="11.5" fill="#484848" stroke="#484848" stroke-width="0.35">A</text>
<text x="8.3" y="11.3" font-family="Liberation Sans" font-size="11.5" fill="#484848" stroke="#484848" stroke-width="0.35">B</text>
<text x="12.6" y="19.4" font-family="Liberation Sans" font-size="11.5" fill="#484848" stroke="#484848" stroke-width="0.35">C</text>
</svg>
<div class="t" style="left:1097.50px;top:235.80px;font-size:13px;line-height:13px;color:#2b2b2b;font-weight:bold;font-style:normal;font-family:'Liberation Sans', sans-serif;">Eta</div>
<div class="r" style="left:1244px;top:232px;width:20px;height:20px;background:#fff;border:1px solid #a3a3a3;box-sizing:border-box;"></div>
<svg class="s" style="left:1250px;top:239px;" width="8" height="5" viewBox="0 0 8 5"><path d="M0 0.5 H8 L4 4.5 Z" fill="#6e6e6e"/></svg>
<div class="r" style="left:1267px;top:229px;width:1px;height:26px;background:#dcdcdc;"></div>
<svg class="s" style="left:1269px;top:231px;" width="24" height="22" viewBox="0 0 24 22">
<text x="0.6" y="15.6" font-family="Liberation Sans" font-size="11.5" fill="#484848" stroke="#484848" stroke-width="0.35">A</text>
<text x="8.3" y="11.3" font-family="Liberation Sans" font-size="11.5" fill="#484848" stroke="#484848" stroke-width="0.35">B</text>
<text x="12.6" y="19.4" font-family="Liberation Sans" font-size="11.5" fill="#484848" stroke="#484848" stroke-width="0.35">C</text>
</svg>
<div class="t" style="left:1298.50px;top:235.80px;font-size:13px;line-height:13px;color:#2b2b2b;font-weight:bold;font-style:normal;font-family:'Liberation Sans', sans-serif;">Genere</div>
<div class="r" style="left:263px;top:255px;width:1111px;height:5px;background:#00b2a4;"></div>
<div class="r" style="left:463px;top:255px;width:1px;height:5px;background:#ffffff;"></div>
<div class="r" style="left:664px;top:255px;width:1px;height:5px;background:#ffffff;"></div>
<div class="r" style="left:865px;top:255px;width:1px;height:5px;background:#ffffff;"></div>
<div class="r" style="left:1066px;top:255px;width:1px;height:5px;background:#ffffff;"></div>
<div class="r" style="left:1267px;top:255px;width:1px;height:5px;background:#ffffff;"></div>
<div class="r" style="left:263px;top:260px;width:1090px;height:515px;background:#ffffff;"></div>
<div class="r" style="left:866px;top:260px;width:199px;height:515px;background:#d5eee1;"></div>
<div class="r" style="left:463px;top:260px;width:1px;height:515px;background:#dcdcdc;"></div>
<div class="r" style="left:664px;top:260px;width:1px;height:515px;background:#dcdcdc;"></div>
<div class="r" style="left:865px;top:260px;width:1px;height:515px;background:#dcdcdc;"></div>
<div class="r" style="left:1066px;top:260px;width:1px;height:515px;background:#dcdcdc;"></div>
<div class="r" style="left:1267px;top:260px;width:1px;height:515px;background:#dcdcdc;"></div>
<div class="r" style="left:263px;top:286px;width:1090px;height:1px;background:#dadada;"></div>
<div class="r" style="left:225px;top:286px;width:37px;height:1px;background:#dddddd;"></div>
<div class="r" style="left:263px;top:312px;width:1090px;height:1px;background:#dadada;"></div>
<div class="r" style="left:225px;top:312px;width:37px;height:1px;background:#dddddd;"></div>
<div class="r" style="left:263px;top:339px;width:1090px;height:1px;background:#dadada;"></div>
<div class="r" style="left:225px;top:339px;width:37px;height:1px;background:#dddddd;"></div>
<div class="r" style="left:263px;top:365px;width:1090px;height:1px;background:#dadada;"></div>
<div class="r" style="left:225px;top:365px;width:37px;height:1px;background:#dddddd;"></div>
<div class="r" style="left:263px;top:391px;width:1090px;height:1px;background:#dadada;"></div>
<div class="r" style="left:225px;top:391px;width:37px;height:1px;background:#dddddd;"></div>
<div class="r" style="left:263px;top:418px;width:1090px;height:1px;background:#dadada;"></div>
<div class="r" style="left:225px;top:418px;width:37px;height:1px;background:#dddddd;"></div>
<div class="r" style="left:263px;top:444px;width:1090px;height:1px;background:#dadada;"></div>
<div class="r" style="left:225px;top:444px;width:37px;height:1px;background:#dddddd;"></div>
<div class="r" style="left:263px;top:470px;width:1090px;height:1px;background:#dadada;"></div>
<div class="r" style="left:225px;top:470px;width:37px;height:1px;background:#dddddd;"></div>
<div class="r" style="left:263px;top:497px;width:1090px;height:1px;background:#dadada;"></div>
<div class="r" style="left:225px;top:497px;width:37px;height:1px;background:#dddddd;"></div>
<div class="r" style="left:263px;top:523px;width:1090px;height:1px;background:#dadada;"></div>
<div class="r" style="left:225px;top:523px;width:37px;height:1px;background:#dddddd;"></div>
<div class="r" style="left:263px;top:550px;width:1090px;height:1px;background:#dadada;"></div>
<div class="r" style="left:225px;top:550px;width:37px;height:1px;background:#dddddd;"></div>
<div class="r" style="left:263px;top:576px;width:1090px;height:1px;background:#dadada;"></div>
<div class="r" style="left:225px;top:576px;width:37px;height:1px;background:#dddddd;"></div>
<div class="r" style="left:263px;top:602px;width:1090px;height:1px;background:#dadada;"></div>
<div class="r" style="left:225px;top:602px;width:37px;height:1px;background:#dddddd;"></div>
<div class="r" style="left:263px;top:629px;width:1090px;height:1px;background:#dadada;"></div>
<div class="r" style="left:225px;top:629px;width:37px;height:1px;background:#dddddd;"></div>
<div class="r" style="left:263px;top:655px;width:1090px;height:1px;background:#dadada;"></div>
<div class="r" style="left:225px;top:655px;width:37px;height:1px;background:#dddddd;"></div>
<div class="r" style="left:263px;top:681px;width:1090px;height:1px;background:#dadada;"></div>
<div class="r" style="left:225px;top:681px;width:37px;height:1px;background:#dddddd;"></div>
<div class="r" style="left:263px;top:708px;width:1090px;height:1px;background:#dadada;"></div>
<div class="r" style="left:225px;top:708px;width:37px;height:1px;background:#dddddd;"></div>
<div class="r" style="left:263px;top:734px;width:1090px;height:1px;background:#dadada;"></div>
<div class="r" style="left:225px;top:734px;width:37px;height:1px;background:#dddddd;"></div>
<div class="r" style="left:263px;top:761px;width:1090px;height:1px;background:#dadada;"></div>
<div class="r" style="left:225px;top:761px;width:37px;height:1px;background:#dddddd;"></div>
<div class="r" style="left:225px;top:787px;width:37px;height:1px;background:#dddddd;"></div>
<div class="t" style="left:235.55px;top:794.03px;font-size:15.2px;line-height:15.2px;color:#333333;font-weight:normal;font-style:normal;font-family:'Liberation Sans', sans-serif;letter-spacing:-0.6px;">21</div>
<div class="t" style="left:240.08px;top:266.13px;font-size:15.2px;line-height:15.2px;color:#333333;font-weight:normal;font-style:normal;font-family:'Liberation Sans', sans-serif;letter-spacing:-0.6px;">1</div>
<div class="t" style="left:405.95px;top:266.87px;font-size:13.5px;line-height:13.5px;color:#2b2b2b;font-weight:normal;font-style:italic;font-family:'Liberation Sans', sans-serif;">2345853</div>
<div class="t" style="left:629.35px;top:266.87px;font-size:13.5px;line-height:13.5px;color:#2b2b2b;font-weight:normal;font-style:italic;font-family:'Liberation Sans', sans-serif;">2020</div>
<div class="t" style="left:845.40px;top:266.87px;font-size:13.5px;line-height:13.5px;color:#2b2b2b;font-weight:normal;font-style:italic;font-family:'Liberation Sans', sans-serif;">44</div>
<div class="t" style="left:870.00px;top:266.87px;font-size:13.5px;line-height:13.5px;color:#2b2b2b;font-weight:normal;font-style:normal;font-family:'Liberation Sans', sans-serif;letter-spacing:-0.004px;">Porta Ticinese - Conchetta</div>
<div class="t" style="left:1070.60px;top:266.87px;font-size:13.5px;line-height:13.5px;color:#2b2b2b;font-weight:normal;font-style:normal;font-family:'Liberation Sans', sans-serif;">0</div>
<div class="t" style="left:1271.90px;top:266.87px;font-size:13.5px;line-height:13.5px;color:#2b2b2b;font-weight:normal;font-style:normal;font-family:'Liberation Sans', sans-serif;">Femmine</div>
<div class="t" style="left:240.08px;top:292.50px;font-size:15.2px;line-height:15.2px;color:#333333;font-weight:normal;font-style:normal;font-family:'Liberation Sans', sans-serif;letter-spacing:-0.6px;">2</div>
<div class="t" style="left:405.95px;top:293.24px;font-size:13.5px;line-height:13.5px;color:#2b2b2b;font-weight:normal;font-style:italic;font-family:'Liberation Sans', sans-serif;">2345854</div>
<div class="t" style="left:629.35px;top:293.24px;font-size:13.5px;line-height:13.5px;color:#2b2b2b;font-weight:normal;font-style:italic;font-family:'Liberation Sans', sans-serif;">2020</div>
<div class="t" style="left:845.40px;top:293.24px;font-size:13.5px;line-height:13.5px;color:#2b2b2b;font-weight:normal;font-style:italic;font-family:'Liberation Sans', sans-serif;">44</div>
<div class="t" style="left:870.00px;top:293.24px;font-size:13.5px;line-height:13.5px;color:#2b2b2b;font-weight:normal;font-style:normal;font-family:'Liberation Sans', sans-serif;letter-spacing:-0.004px;">Porta Ticinese - Conchetta</div>
<div class="t" style="left:1070.60px;top:293.24px;font-size:13.5px;line-height:13.5px;color:#2b2b2b;font-weight:normal;font-style:normal;font-family:'Liberation Sans', sans-serif;">0</div>
<div class="t" style="left:1271.90px;top:293.24px;font-size:13.5px;line-height:13.5px;color:#2b2b2b;font-weight:normal;font-style:normal;font-family:'Liberation Sans', sans-serif;">Femmine</div>
<div class="t" style="left:240.08px;top:318.87px;font-size:15.2px;line-height:15.2px;color:#333333;font-weight:normal;font-style:normal;font-family:'Liberation Sans', sans-serif;letter-spacing:-0.6px;">3</div>
<div class="t" style="left:405.90px;top:319.61px;font-size:13.5px;line-height:13.5px;color:#2b2b2b;font-weight:normal;font-style:italic;font-family:'Liberation Sans', sans-serif;">2345855</div>
<div class="t" style="left:629.35px;top:319.61px;font-size:13.5px;line-height:13.5px;color:#2b2b2b;font-weight:normal;font-style:italic;font-family:'Liberation Sans', sans-serif;">2020</div>
<div class="t" style="left:845.40px;top:319.61px;font-size:13.5px;line-height:13.5px;color:#2b2b2b;font-weight:normal;font-style:italic;font-family:'Liberation Sans', sans-serif;">44</div>
<div class="t" style="left:870.00px;top:319.61px;font-size:13.5px;line-height:13.5px;color:#2b2b2b;font-weight:normal;font-style:normal;font-family:'Liberation Sans', sans-serif;letter-spacing:-0.004px;">Porta Ticinese - Conchetta</div>
<div class="t" style="left:1070.60px;top:319.61px;font-size:13.5px;line-height:13.5px;color:#2b2b2b;font-weight:normal;font-style:normal;font-family:'Liberation Sans', sans-serif;">0</div>
<div class="t" style="left:1271.90px;top:319.61px;font-size:13.5px;line-height:13.5px;color:#2b2b2b;font-weight:normal;font-style:normal;font-family:'Liberation Sans', sans-serif;">Femmine</div>
<div class="t" style="left:240.08px;top:345.24px;font-size:15.2px;line-height:15.2px;color:#333333;font-weight:normal;font-style:normal;font-family:'Liberation Sans', sans-serif;letter-spacing:-0.6px;">4</div>
<div class="t" style="left:405.90px;top:345.98px;font-size:13.5px;line-height:13.5px;color:#2b2b2b;font-weight:normal;font-style:italic;font-family:'Liberation Sans', sans-serif;">2345856</div>
<div class="t" style="left:629.35px;top:345.98px;font-size:13.5px;line-height:13.5px;color:#2b2b2b;font-weight:normal;font-style:italic;font-family:'Liberation Sans', sans-serif;">2020</div>
<div class="t" style="left:845.40px;top:345.98px;font-size:13.5px;line-height:13.5px;color:#2b2b2b;font-weight:normal;font-style:italic;font-family:'Liberation Sans', sans-serif;">44</div>
<div class="t" style="left:870.00px;top:345.98px;font-size:13.5px;line-height:13.5px;color:#2b2b2b;font-weight:normal;font-style:normal;font-family:'Liberation Sans', sans-serif;letter-spacing:-0.004px;">Porta Ticinese - Conchetta</div>
<div class="t" style="left:1070.60px;top:345.98px;font-size:13.5px;line-height:13.5px;color:#2b2b2b;font-weight:normal;font-style:normal;font-family:'Liberation Sans', sans-serif;">0</div>
<div class="t" style="left:1271.90px;top:345.98px;font-size:13.5px;line-height:13.5px;color:#2b2b2b;font-weight:normal;font-style:normal;font-family:'Liberation Sans', sans-serif;">Femmine</div>
<div class="t" style="left:240.08px;top:371.61px;font-size:15.2px;line-height:15.2px;color:#333333;font-weight:normal;font-style:normal;font-family:'Liberation Sans', sans-serif;letter-spacing:-0.6px;">5</div>
<div class="t" style="left:405.50px;top:372.35px;font-size:13.5px;line-height:13.5px;color:#2b2b2b;font-weight:normal;font-style:italic;font-family:'Liberation Sans', sans-serif;">2345857</div>
<div class="t" style="left:629.35px;top:372.35px;font-size:13.5px;line-height:13.5px;color:#2b2b2b;font-weight:normal;font-style:italic;font-family:'Liberation Sans', sans-serif;">2020</div>
<div class="t" style="left:845.40px;top:372.35px;font-size:13.5px;line-height:13.5px;color:#2b2b2b;font-weight:normal;font-style:italic;font-family:'Liberation Sans', sans-serif;">44</div>
<div class="t" style="left:870.00px;top:372.35px;font-size:13.5px;line-height:13.5px;color:#2b2b2b;font-weight:normal;font-style:normal;font-family:'Liberation Sans', sans-serif;letter-spacing:-0.004px;">Porta Ticinese - Conchetta</div>
<div class="t" style="left:1070.60px;top:372.35px;font-size:13.5px;line-height:13.5px;color:#2b2b2b;font-weight:normal;font-style:normal;font-family:'Liberation Sans', sans-serif;">0</div>
<div class="t" style="left:1271.90px;top:372.35px;font-size:13.5px;line-height:13.5px;color:#2b2b2b;font-weight:normal;font-style:normal;font-family:'Liberation Sans', sans-serif;">Femmine</div>
<div class="t" style="left:240.08px;top:397.98px;font-size:15.2px;line-height:15.2px;color:#333333;font-weight:normal;font-style:normal;font-family:'Liberation Sans', sans-serif;letter-spacing:-0.6px;">6</div>
<div class="t" style="left:405.95px;top:398.72px;font-size:13.5px;line-height:13.5px;color:#2b2b2b;font-weight:normal;font-style:italic;font-family:'Liberation Sans', sans-serif;">2345858</div>
<div class="t" style="left:629.35px;top:398.72px;font-size:13.5px;line-height:13.5px;color:#2b2b2b;font-weight:normal;font-style:italic;font-family:'Liberation Sans', sans-serif;">2020</div>
<div class="t" style="left:845.40px;top:398.72px;font-size:13.5px;line-height:13.5px;color:#2b2b2b;font-weight:normal;font-style:italic;font-family:'Liberation Sans', sans-serif;">44</div>
<div class="t" style="left:870.00px;top:398.72px;font-size:13.5px;line-height:13.5px;color:#2b2b2b;font-weight:normal;font-style:normal;font-family:'Liberation Sans', sans-serif;letter-spacing:-0.004px;">Porta Ticinese - Conchetta</div>
<div class="t" style="left:1070.60px;top:398.72px;font-size:13.5px;line-height:13.5px;color:#2b2b2b;font-weight:normal;font-style:normal;font-family:'Liberation Sans', sans-serif;">0</div>
<div class="t" style="left:1271.90px;top:398.72px;font-size:13.5px;line-height:13.5px;color:#2b2b2b;font-weight:normal;font-style:normal;font-family:'Liberation Sans', sans-serif;">Femmine</div>
<div class="t" style="left:240.08px;top:424.35px;font-size:15.2px;line-height:15.2px;color:#333333;font-weight:normal;font-style:normal;font-family:'Liberation Sans', sans-serif;letter-spacing:-0.6px;">7</div>
<div class="t" style="left:405.95px;top:425.09px;font-size:13.5px;line-height:13.5px;color:#2b2b2b;font-weight:normal;font-style:italic;font-family:'Liberation Sans', sans-serif;">2345859</div>
<div class="t" style="left:629.35px;top:425.09px;font-size:13.5px;line-height:13.5px;color:#2b2b2b;font-weight:normal;font-style:italic;font-family:'Liberation Sans', sans-serif;">2020</div>
<div class="t" style="left:845.40px;top:425.09px;font-size:13.5px;line-height:13.5px;color:#2b2b2b;font-weight:normal;font-style:italic;font-family:'Liberation Sans', sans-serif;">44</div>
<div class="t" style="left:870.00px;top:425.09px;font-size:13.5px;line-height:13.5px;color:#2b2b2b;font-weight:normal;font-style:normal;font-family:'Liberation Sans', sans-serif;letter-spacing:-0.004px;">Porta Ticinese - Conchetta</div>
<div class="t" style="left:1070.60px;top:425.09px;font-size:13.5px;line-height:13.5px;color:#2b2b2b;font-weight:normal;font-style:normal;font-family:'Liberation Sans', sans-serif;">0</div>
<div class="t" style="left:1271.90px;top:425.09px;font-size:13.5px;line-height:13.5px;color:#2b2b2b;font-weight:normal;font-style:normal;font-family:'Liberation Sans', sans-serif;">Maschi</div>
<div class="t" style="left:240.08px;top:450.72px;font-size:15.2px;line-height:15.2px;color:#333333;font-weight:normal;font-style:normal;font-family:'Liberation Sans', sans-serif;letter-spacing:-0.6px;">8</div>
<div class="t" style="left:405.95px;top:451.46px;font-size:13.5px;line-height:13.5px;color:#2b2b2b;font-weight:normal;font-style:italic;font-family:'Liberation Sans', sans-serif;">2345860</div>
<div class="t" style="left:629.35px;top:451.46px;font-size:13.5px;line-height:13.5px;color:#2b2b2b;font-weight:normal;font-style:italic;font-family:'Liberation Sans', sans-serif;">2020</div>
<div class="t" style="left:845.40px;top:451.46px;font-size:13.5px;line-height:13.5px;color:#2b2b2b;font-weight:normal;font-style:italic;font-family:'Liberation Sans', sans-serif;">44</div>
<div class="t" style="left:870.00px;top:451.46px;font-size:13.5px;line-height:13.5px;color:#2b2b2b;font-weight:normal;font-style:normal;font-family:'Liberation Sans', sans-serif;letter-spacing:-0.004px;">Porta Ticinese - Conchetta</div>
<div class="t" style="left:1070.60px;top:451.46px;font-size:13.5px;line-height:13.5px;color:#2b2b2b;font-weight:normal;font-style:normal;font-family:'Liberation Sans', sans-serif;">0</div>
<div class="t" style="left:1271.90px;top:451.46px;font-size:13.5px;line-height:13.5px;color:#2b2b2b;font-weight:normal;font-style:normal;font-family:'Liberation Sans', sans-serif;">Maschi</div>
<div class="t" style="left:240.08px;top:477.09px;font-size:15.2px;line-height:15.2px;color:#333333;font-weight:normal;font-style:normal;font-family:'Liberation Sans', sans-serif;letter-spacing:-0.6px;">9</div>
<div class="t" style="left:405.95px;top:477.83px;font-size:13.5px;line-height:13.5px;color:#2b2b2b;font-weight:normal;font-style:italic;font-family:'Liberation Sans', sans-serif;">2345861</div>
<div class="t" style="left:629.35px;top:477.83px;font-size:13.5px;line-height:13.5px;color:#2b2b2b;font-weight:normal;font-style:italic;font-family:'Liberation Sans', sans-serif;">2020</div>
<div class="t" style="left:845.40px;top:477.83px;font-size:13.5px;line-height:13.5px;color:#2b2b2b;font-weight:normal;font-style:italic;font-family:'Liberation Sans', sans-serif;">44</div>
<div class="t" style="left:870.00px;top:477.83px;font-size:13.5px;line-height:13.5px;color:#2b2b2b;font-weight:normal;font-style:normal;font-family:'Liberation Sans', sans-serif;letter-spacing:-0.004px;">Porta Ticinese - Conchetta</div>
<div class="t" style="left:1070.60px;top:477.83px;font-size:13.5px;line-height:13.5px;color:#2b2b2b;font-weight:normal;font-style:normal;font-family:'Liberation Sans', sans-serif;">0</div>
<div class="t" style="left:1271.90px;top:477.83px;font-size:13.5px;line-height:13.5px;color:#2b2b2b;font-weight:normal;font-style:normal;font-family:'Liberation Sans', sans-serif;">Maschi</div>
<div class="t" style="left:235.85px;top:503.46px;font-size:15.2px;line-height:15.2px;color:#333333;font-weight:normal;font-style:normal;font-family:'Liberation Sans', sans-serif;letter-spacing:-0.6px;">10</div>
<div class="t" style="left:405.95px;top:504.20px;font-size:13.5px;line-height:13.5px;color:#2b2b2b;font-weight:normal;font-style:italic;font-family:'Liberation Sans', sans-serif;">2345862</div>
<div class="t" style="left:629.35px;top:504.20px;font-size:13.5px;line-height:13.5px;color:#2b2b2b;font-weight:normal;font-style:italic;font-family:'Liberation Sans', sans-serif;">2020</div>
<div class="t" style="left:845.40px;top:504.20px;font-size:13.5px;line-height:13.5px;color:#2b2b2b;font-weight:normal;font-style:italic;font-family:'Liberation Sans', sans-serif;">44</div>
<div class="t" style="left:870.00px;top:504.20px;font-size:13.5px;line-height:13.5px;color:#2b2b2b;font-weight:normal;font-style:normal;font-family:'Liberation Sans', sans-serif;letter-spacing:-0.004px;">Porta Ticinese - Conchetta</div>
<div class="t" style="left:1070.60px;top:504.20px;font-size:13.5px;line-height:13.5px;color:#2b2b2b;font-weight:normal;font-style:normal;font-family:'Liberation Sans', sans-serif;">0</div>
<div class="t" style="left:1271.90px;top:504.20px;font-size:13.5px;line-height:13.5px;color:#2b2b2b;font-weight:normal;font-style:normal;font-family:'Liberation Sans', sans-serif;">Maschi</div>
<div class="t" style="left:236.40px;top:529.83px;font-size:15.2px;line-height:15.2px;color:#333333;font-weight:normal;font-style:normal;font-family:'Liberation Sans', sans-serif;letter-spacing:-0.6px;">11</div>
<div class="t" style="left:405.95px;top:530.57px;font-size:13.5px;line-height:13.5px;color:#2b2b2b;font-weight:normal;font-style:italic;font-family:'Liberation Sans', sans-serif;">2345863</div>
<div class="t" style="left:629.35px;top:530.57px;font-size:13.5px;line-height:13.5px;color:#2b2b2b;font-weight:normal;font-style:italic;font-family:'Liberation Sans', sans-serif;">2020</div>
<div class="t" style="left:845.40px;top:530.57px;font-size:13.5px;line-height:13.5px;color:#2b2b2b;font-weight:normal;font-style:italic;font-family:'Liberation Sans', sans-serif;">44</div>
<div class="t" style="left:870.00px;top:530.57px;font-size:13.5px;line-height:13.5px;color:#2b2b2b;font-weight:normal;font-style:normal;font-family:'Liberation Sans', sans-serif;letter-spacing:-0.004px;">Porta Ticinese - Conchetta</div>
<div class="t" style="left:1070.60px;top:530.57px;font-size:13.5px;line-height:13.5px;color:#2b2b2b;font-weight:normal;font-style:normal;font-family:'Liberation Sans', sans-serif;">1</div>
<div class="t" style="left:1271.90px;top:530.57px;font-size:13.5px;line-height:13.5px;color:#2b2b2b;font-weight:normal;font-style:normal;font-family:'Liberation Sans', sans-serif;">Femmine</div>
<div class="t" style="left:235.85px;top:556.20px;font-size:15.2px;line-height:15.2px;color:#333333;font-weight:normal;font-style:normal;font-family:'Liberation Sans', sans-serif;letter-spacing:-0.6px;">12</div>
<div class="t" style="left:405.95px;top:556.94px;font-size:13.5px;line-height:13.5px;color:#2b2b2b;font-weight:normal;font-style:italic;font-family:'Liberation Sans', sans-serif;">2345864</div>
<div class="t" style="left:629.35px;top:556.94px;font-size:13.5px;line-height:13.5px;color:#2b2b2b;font-weight:normal;font-style:italic;font-family:'Liberation Sans', sans-serif;">2020</div>
<div class="t" style="left:845.40px;top:556.94px;font-size:13.5px;line-height:13.5px;color:#2b2b2b;font-weight:normal;font-style:italic;font-family:'Liberation Sans', sans-serif;">44</div>
<div class="t" style="left:870.00px;top:556.94px;font-size:13.5px;line-height:13.5px;color:#2b2b2b;font-weight:normal;font-style:normal;font-family:'Liberation Sans', sans-serif;letter-spacing:-0.004px;">Porta Ticinese - Conchetta</div>
<div class="t" style="left:1070.60px;top:556.94px;font-size:13.5px;line-height:13.5px;color:#2b2b2b;font-weight:normal;font-style:normal;font-family:'Liberation Sans', sans-serif;">1</div>
<div class="t" style="left:1271.90px;top:556.94px;font-size:13.5px;line-height:13.5px;color:#2b2b2b;font-weight:normal;font-style:normal;font-family:'Liberation Sans', sans-serif;">Femmine</div>
<div class="t" style="left:235.85px;top:582.57px;font-size:15.2px;line-height:15.2px;color:#333333;font-weight:normal;font-style:normal;font-family:'Liberation Sans', sans-serif;letter-spacing:-0.6px;">13</div>
<div class="t" style="left:405.90px;top:583.31px;font-size:13.5px;line-height:13.5px;color:#2b2b2b;font-weight:normal;font-style:italic;font-family:'Liberation Sans', sans-serif;">2345865</div>
<div class="t" style="left:629.35px;top:583.31px;font-size:13.5px;line-height:13.5px;color:#2b2b2b;font-weight:normal;font-style:italic;font-family:'Liberation Sans', sans-serif;">2020</div>
<div class="t" style="left:845.40px;top:583.31px;font-size:13.5px;line-height:13.5px;color:#2b2b2b;font-weight:normal;font-style:italic;font-family:'Liberation Sans', sans-serif;">44</div>
<div class="t" style="left:870.00px;top:583.31px;font-size:13.5px;line-height:13.5px;color:#2b2b2b;font-weight:normal;font-style:normal;font-family:'Liberation Sans', sans-serif;letter-spacing:-0.004px;">Porta Ticinese - Conchetta</div>
<div class="t" style="left:1070.60px;top:583.31px;font-size:13.5px;line-height:13.5px;color:#2b2b2b;font-weight:normal;font-style:normal;font-family:'Liberation Sans', sans-serif;">1</div>
<div class="t" style="left:1271.90px;top:583.31px;font-size:13.5px;line-height:13.5px;color:#2b2b2b;font-weight:normal;font-style:normal;font-family:'Liberation Sans', sans-serif;">Femmine</div>
<div class="t" style="left:235.85px;top:608.94px;font-size:15.2px;line-height:15.2px;color:#333333;font-weight:normal;font-style:normal;font-family:'Liberation Sans', sans-serif;letter-spacing:-0.6px;">14</div>
<div class="t" style="left:405.90px;top:609.68px;font-size:13.5px;line-height:13.5px;color:#2b2b2b;font-weight:normal;font-style:italic;font-family:'Liberation Sans', sans-serif;">2345866</div>
<div class="t" style="left:629.35px;top:609.68px;font-size:13.5px;line-height:13.5px;color:#2b2b2b;font-weight:normal;font-style:italic;font-family:'Liberation Sans', sans-serif;">2020</div>
<div class="t" style="left:845.40px;top:609.68px;font-size:13.5px;line-height:13.5px;color:#2b2b2b;font-weight:normal;font-style:italic;font-family:'Liberation Sans', sans-serif;">44</div>
<div class="t" style="left:870.00px;top:609.68px;font-size:13.5px;line-height:13.5px;color:#2b2b2b;font-weight:normal;font-style:normal;font-family:'Liberation Sans', sans-serif;letter-spacing:-0.004px;">Porta Ticinese - Conchetta</div>
<div class="t" style="left:1070.60px;top:609.68px;font-size:13.5px;line-height:13.5px;color:#2b2b2b;font-weight:normal;font-style:normal;font-family:'Liberation Sans', sans-serif;">1</div>
<div class="t" style="left:1271.90px;top:609.68px;font-size:13.5px;line-height:13.5px;color:#2b2b2b;font-weight:normal;font-style:normal;font-family:'Liberation Sans', sans-serif;">Femmine</div>
<div class="t" style="left:235.85px;top:635.31px;font-size:15.2px;line-height:15.2px;color:#333333;font-weight:normal;font-style:normal;font-family:'Liberation Sans', sans-serif;letter-spacing:-0.6px;">15</div>
<div class="t" style="left:405.50px;top:636.05px;font-size:13.5px;line-height:13.5px;color:#2b2b2b;font-weight:normal;font-style:italic;font-family:'Liberation Sans', sans-serif;">2345867</div>
<div class="t" style="left:629.35px;top:636.05px;font-size:13.5px;line-height:13.5px;color:#2b2b2b;font-weight:normal;font-style:italic;font-family:'Liberation Sans', sans-serif;">2020</div>
<div class="t" style="left:845.40px;top:636.05px;font-size:13.5px;line-height:13.5px;color:#2b2b2b;font-weight:normal;font-style:italic;font-family:'Liberation Sans', sans-serif;">44</div>
<div class="t" style="left:870.00px;top:636.05px;font-size:13.5px;line-height:13.5px;color:#2b2b2b;font-weight:normal;font-style:normal;font-family:'Liberation Sans', sans-serif;letter-spacing:-0.004px;">Porta Ticinese - Conchetta</div>
<div class="t" style="left:1070.60px;top:636.05px;font-size:13.5px;line-height:13.5px;color:#2b2b2b;font-weight:normal;font-style:normal;font-family:'Liberation Sans', sans-serif;">1</div>
<div class="t" style="left:1271.90px;top:636.05px;font-size:13.5px;line-height:13.5px;color:#2b2b2b;font-weight:normal;font-style:normal;font-family:'Liberation Sans', sans-serif;">Femmine</div>
<div class="t" style="left:235.85px;top:661.68px;font-size:15.2px;line-height:15.2px;color:#333333;font-weight:normal;font-style:normal;font-family:'Liberation Sans', sans-serif;letter-spacing:-0.6px;">16</div>
<div class="t" style="left:405.95px;top:662.42px;font-size:13.5px;line-height:13.5px;color:#2b2b2b;font-weight:normal;font-style:italic;font-family:'Liberation Sans', sans-serif;">2345868</div>
<div class="t" style="left:629.35px;top:662.42px;font-size:13.5px;line-height:13.5px;color:#2b2b2b;font-weight:normal;font-style:italic;font-family:'Liberation Sans', sans-serif;">2020</div>
<div class="t" style="left:845.40px;top:662.42px;font-size:13.5px;line-height:13.5px;color:#2b2b2b;font-weight:normal;font-style:italic;font-family:'Liberation Sans', sans-serif;">44</div>
<div class="t" style="left:870.00px;top:662.42px;font-size:13.5px;line-height:13.5px;color:#2b2b2b;font-weight:normal;font-style:normal;font-family:'Liberation Sans', sans-serif;letter-spacing:-0.004px;">Porta Ticinese - Conchetta</div>
<div class="t" style="left:1070.60px;top:662.42px;font-size:13.5px;line-height:13.5px;color:#2b2b2b;font-weight:normal;font-style:normal;font-family:'Liberation Sans', sans-serif;">1</div>
<div class="t" style="left:1271.90px;top:662.42px;font-size:13.5px;line-height:13.5px;color:#2b2b2b;font-weight:normal;font-style:normal;font-family:'Liberation Sans', sans-serif;">Femmine</div>
<div class="t" style="left:235.85px;top:688.05px;font-size:15.2px;line-height:15.2px;color:#333333;font-weight:normal;font-style:normal;font-family:'Liberation Sans', sans-serif;letter-spacing:-0.6px;">17</div>
<div class="t" style="left:405.95px;top:688.79px;font-size:13.5px;line-height:13.5px;color:#2b2b2b;font-weight:normal;font-style:italic;font-family:'Liberation Sans', sans-serif;">2345869</div>
<div class="t" style="left:629.35px;top:688.79px;font-size:13.5px;line-height:13.5px;color:#2b2b2b;font-weight:normal;font-style:italic;font-family:'Liberation Sans', sans-serif;">2020</div>
<div class="t" style="left:845.40px;top:688.79px;font-size:13.5px;line-height:13.5px;color:#2b2b2b;font-weight:normal;font-style:italic;font-family:'Liberation Sans', sans-serif;">44</div>
<div class="t" style="left:870.00px;top:688.79px;font-size:13.5px;line-height:13.5px;color:#2b2b2b;font-weight:normal;font-style:normal;font-family:'Liberation Sans', sans-serif;letter-spacing:-0.004px;">Porta Ticinese - Conchetta</div>
<div class="t" style="left:1070.60px;top:688.79px;font-size:13.5px;line-height:13.5px;color:#2b2b2b;font-weight:normal;font-style:normal;font-family:'Liberation Sans', sans-serif;">1</div>
<div class="t" style="left:1271.90px;top:688.79px;font-size:13.5px;line-height:13.5px;color:#2b2b2b;font-weight:normal;font-style:normal;font-family:'Liberation Sans', sans-serif;">Maschi</div>
<div class="t" style="left:235.85px;top:714.42px;font-size:15.2px;line-height:15.2px;color:#333333;font-weight:normal;font-style:normal;font-family:'Liberation Sans', sans-serif;letter-spacing:-0.6px;">18</div>
<div class="t" style="left:405.95px;top:715.16px;font-size:13.5px;line-height:13.5px;color:#2b2b2b;font-weight:normal;font-style:italic;font-family:'Liberation Sans', sans-serif;">2345870</div>
<div class="t" style="left:629.35px;top:715.16px;font-size:13.5px;line-height:13.5px;color:#2b2b2b;font-weight:normal;font-style:italic;font-family:'Liberation Sans', sans-serif;">2020</div>
<div class="t" style="left:845.40px;top:715.16px;font-size:13.5px;line-height:13.5px;color:#2b2b2b;font-weight:normal;font-style:italic;font-family:'Liberation Sans', sans-serif;">44</div>
<div class="t" style="left:870.00px;top:715.16px;font-size:13.5px;line-height:13.5px;color:#2b2b2b;font-weight:normal;font-style:normal;font-family:'Liberation Sans', sans-serif;letter-spacing:-0.004px;">Porta Ticinese - Conchetta</div>
<div class="t" style="left:1070.60px;top:715.16px;font-size:13.5px;line-height:13.5px;color:#2b2b2b;font-weight:normal;font-style:normal;font-family:'Liberation Sans', sans-serif;">1</div>
<div class="t" style="left:1271.90px;top:715.16px;font-size:13.5px;line-height:13.5px;color:#2b2b2b;font-weight:normal;font-style:normal;font-family:'Liberation Sans', sans-serif;">Maschi</div>
<div class="t" style="left:235.85px;top:740.79px;font-size:15.2px;line-height:15.2px;color:#333333;font-weight:normal;font-style:normal;font-family:'Liberation Sans', sans-serif;letter-spacing:-0.6px;">19</div>
<div class="t" style="left:405.95px;top:741.53px;font-size:13.5px;line-height:13.5px;color:#2b2b2b;font-weight:normal;font-style:italic;font-family:'Liberation Sans', sans-serif;">2345871</div>
<div class="t" style="left:629.35px;top:741.53px;font-size:13.5px;line-height:13.5px;color:#2b2b2b;font-weight:normal;font-style:italic;font-family:'Liberation Sans', sans-serif;">2020</div>
<div class="t" style="left:845.40px;top:741.53px;font-size:13.5px;line-height:13.5px;color:#2b2b2b;font-weight:normal;font-style:italic;font-family:'Liberation Sans', sans-serif;">44</div>
<div class="t" style="left:870.00px;top:741.53px;font-size:13.5px;line-height:13.5px;color:#2b2b2b;font-weight:normal;font-style:normal;font-family:'Liberation Sans', sans-serif;letter-spacing:-0.004px;">Porta Ticinese - Conchetta</div>
<div class="t" style="left:1070.60px;top:741.53px;font-size:13.5px;line-height:13.5px;color:#2b2b2b;font-weight:normal;font-style:normal;font-family:'Liberation Sans', sans-serif;">1</div>
<div class="t" style="left:1271.90px;top:741.53px;font-size:13.5px;line-height:13.5px;color:#2b2b2b;font-weight:normal;font-style:normal;font-family:'Liberation Sans', sans-serif;">Maschi</div>
<div class="t" style="left:235.85px;top:767.16px;font-size:15.2px;line-height:15.2px;color:#333333;font-weight:normal;font-style:normal;font-family:'Liberation Sans', sans-serif;letter-spacing:-0.6px;">20</div>
<div class="t" style="left:405.95px;top:767.90px;font-size:13.5px;line-height:13.5px;color:#2b2b2b;font-weight:normal;font-style:italic;font-family:'Liberation Sans', sans-serif;">2345872</div>
<div class="t" style="left:629.35px;top:767.90px;font-size:13.5px;line-height:13.5px;color:#2b2b2b;font-weight:normal;font-style:italic;font-family:'Liberation Sans', sans-serif;">2020</div>
<div class="t" style="left:845.40px;top:767.90px;font-size:13.5px;line-height:13.5px;color:#2b2b2b;font-weight:normal;font-style:italic;font-family:'Liberation Sans', sans-serif;">44</div>
<div class="t" style="left:870.00px;top:767.90px;font-size:13.5px;line-height:13.5px;color:#2b2b2b;font-weight:normal;font-style:normal;font-family:'Liberation Sans', sans-serif;letter-spacing:-0.004px;">Porta Ticinese - Conchetta</div>
<div class="t" style="left:1070.60px;top:767.90px;font-size:13.5px;line-height:13.5px;color:#2b2b2b;font-weight:normal;font-style:normal;font-family:'Liberation Sans', sans-serif;">1</div>
<div class="t" style="left:1271.90px;top:767.90px;font-size:13.5px;line-height:13.5px;color:#2b2b2b;font-weight:normal;font-style:normal;font-family:'Liberation Sans', sans-serif;">Maschi</div>
<div class="r" style="left:1353px;top:260px;width:21px;height:515px;background:#f0f0f0;"></div>
<svg class="s" style="left:1356.3px;top:281px;" width="15" height="12" viewBox="0 0 15 12"><path d="M0 7.8 L7.4 0.4 L14.8 7.8 L14.8 11.8 L7.4 4.6 L0 11.8 Z" fill="#5a5a5a"/></svg>
<div class="r" style="left:1354px;top:303px;width:19px;height:166px;background:#cdcdcd;"></div>
<svg class="s" style="left:1356.3px;top:742.2px;" width="15" height="12" viewBox="0 0 15 12"><path d="M0 0 L7.4 7.2 L14.8 0 L14.8 4 L7.4 11.6 L0 4 Z" fill="#5a5a5a"/></svg>
<div class="r" style="left:263px;top:775px;width:1111px;height:22px;background:#f0f0f0;"></div>
<svg class="s" style="left:284.2px;top:779.4px;" width="12" height="14" viewBox="0 0 12 14"><path d="M11.8 0 L4.4 7 L11.8 14 L7.6 14 L0 7 L7.6 0 Z" fill="#5a5a5a"/></svg>
<div class="r" style="left:305px;top:777px;width:681px;height:18px;background:#cdcdcd;"></div>
<svg class="s" style="left:1320.4px;top:779.2px;" width="12" height="14" viewBox="0 0 12 14"><path d="M0 0 L7.4 7 L0 14 L4.2 14 L11.8 7 L4.2 0 Z" fill="#5a5a5a"/></svg>
<div class="r" style="left:220px;top:796px;width:1175px;height:1px;background:#fdfafb;"></div>
<div class="r" style="left:0px;top:797px;width:1395px;height:14px;background:#217346;"></div>
<div class="t" style="left:0.60px;top:804.00px;font-size:13px;line-height:13px;color:#ffffff;font-weight:normal;font-style:normal;font-family:'Liberation Sans', sans-serif;letter-spacing:-0.070px;">8 COLONNE, 999+ RIGHE</div>
<div class="t" style="left:175.60px;top:804.00px;font-size:13px;line-height:13px;color:#ffffff;font-weight:normal;font-style:normal;font-family:'Liberation Sans', sans-serif;letter-spacing:0.333px;">Profilatura della colonna in base alle prime 1000 righe</div>
<svg class="s" style="left:1392px;top:259px;" width="3" height="4" viewBox="0 0 3 4"><path d="M0.3 2.5 L3 0.8 V3.2 Z" fill="#444"/></svg>
<svg class="s" style="left:1392px;top:386px;" width="3" height="4" viewBox="0 0 3 4"><path d="M0.3 2.5 L3 0.8 V3.2 Z" fill="#444"/></svg>
</body></html>
